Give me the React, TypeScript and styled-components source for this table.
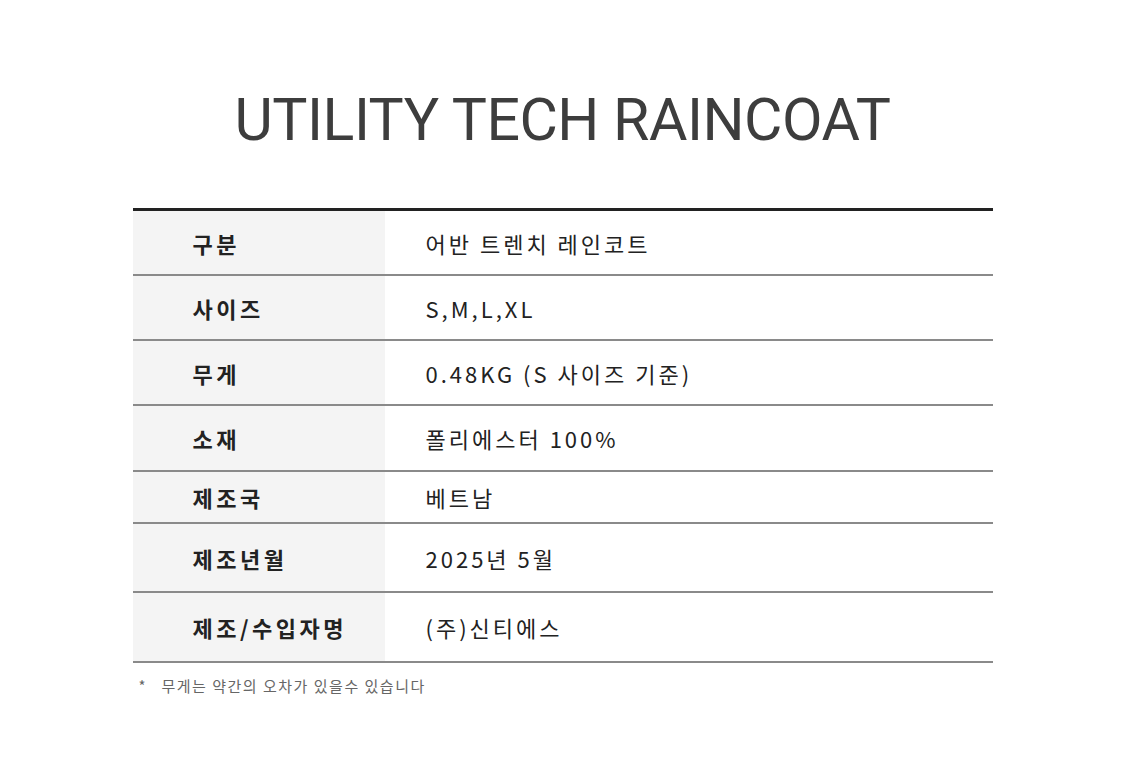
import styled, { createGlobalStyle } from "styled-components";

const rows = [
  { label: "구분", value: "어반 트렌치 레인코트", height: 63 },
  { label: "사이즈", value: "S,M,L,XL", height: 63 },
  { label: "무게", value: "0.48KG (S 사이즈 기준)", height: 63 },
  { label: "소재", value: "폴리에스터 100%", height: 64 },
  { label: "제조국", value: "베트남", height: 50 },
  { label: "제조년월", value: "2025년 5월", height: 67 },
  { label: "제조/수입자명", value: "(주)신티에스", height: 68 },
];

const GlobalStyle = createGlobalStyle`
  body {
    margin: 0;
    background: #fff;
    font-family: "Noto Sans CJK KR", "Noto Sans", sans-serif;
  }
`;

function App() {
  return (
    <StyledPage>
      <GlobalStyle />
      <StyledTitle>UTILITY TECH RAINCOAT</StyledTitle>
      <StyledTable>
        {rows.map((row) => (
          <StyledRow key={row.label} $height={row.height}>
            <StyledLabel>{row.label}</StyledLabel>
            <StyledValue>{row.value}</StyledValue>
          </StyledRow>
        ))}
      </StyledTable>
      <StyledNote>
        <StyledStar>*</StyledStar>
        무게는 약간의 오차가 있을수 있습니다
      </StyledNote>
    </StyledPage>
  );
}

export default App;

const StyledPage = styled.div`
  width: 860px;
  margin: 0 auto;
  padding-top: 84px;
`;

const StyledTitle = styled.h1`
  margin: 0 0 52px;
  text-align: center;
  font-family: Roboto, "Noto Sans", sans-serif;
  font-weight: 400;
  font-size: 59px;
  line-height: 72px;
  letter-spacing: -0.5px;
  color: #3d3d3d;
`;

const StyledTable = styled.div`
  border-top: 3px solid #222;
`;

const StyledRow = styled.div<{ $height: number }>`
  display: grid;
  grid-template-columns: 252px 1fr;
  height: ${(p) => p.$height}px;
  border-bottom: 2px solid #8a8a8a;
`;

const StyledLabel = styled.div`
  display: flex;
  align-items: center;
  padding-left: 60px;
  background: #f4f4f4;
  font-size: 22px;
  font-weight: 700;
  letter-spacing: 3.5px;
  color: #222;
`;

const StyledValue = styled.div`
  display: flex;
  align-items: center;
  padding-left: 41px;
  font-size: 22px;
  font-weight: 400;
  color: #222;
  letter-spacing: 3px;
`;

const StyledNote = styled.div`
  display: flex;
  align-items: center;
  margin-top: 12px;
  padding-left: 6px;
  font-size: 15px;
  letter-spacing: 1.5px;
  color: #666;
`;

const StyledStar = styled.span`
  width: 23px;
`;
